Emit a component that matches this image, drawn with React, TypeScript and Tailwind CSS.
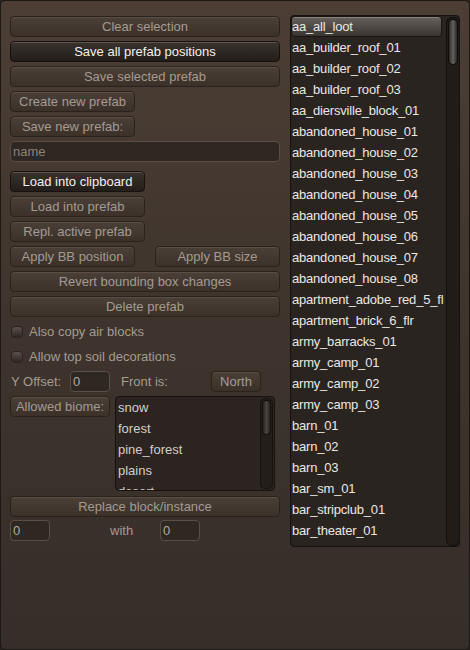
import React from "react";

const font = "font-['Liberation_Sans',Arial,sans-serif]";

/** Beveled game-UI button. `on` = the darker active style with bright text */
const Btn: React.FC<{ label: string; w?: string; on?: boolean }> = ({ label, w = "w-full", on }) => (
  <div
    className={`${w} h-[21px] shrink-0 flex items-center justify-center rounded-[4px] border text-[13px] leading-none ${
      on
        ? "bg-gradient-to-b from-[#3a322c] to-[#231e1a] border-[#17120f] text-[#f2f0ee] shadow-[inset_0_1px_0_#5e544b]"
        : "bg-gradient-to-b from-[#4b4038] to-[#3b3129] border-[#2a221d] text-[#a39b93] shadow-[inset_0_1px_0_#5a4e45]"
    }`}
  >
    {label}
  </div>
);

const Field: React.FC<{ value: string; w: string; dim?: boolean }> = ({ value, w, dim }) => (
  <div
    className={`${w} h-[21px] shrink-0 flex items-center px-[2px] rounded-[4px] border border-[#5a4e45] bg-[#2f2722] text-[13px] ${
      dim ? "text-[#8a827b]" : "text-[#b3aba3]"
    }`}
  >
    {value}
  </div>
);

const Check: React.FC<{ label: string }> = ({ label }) => (
  <div className="h-[21px] flex items-center gap-[6px] text-[13px] text-[#a39b93]">
    <span className="ml-[1px] w-[12px] h-[12px] rounded-[4px] bg-gradient-to-b from-[#5c524a] to-[#2e2722] border border-[#2a221d]" />
    {label}
  </div>
);

const prefabs = [
  "aa_all_loot",
  "aa_builder_roof_01",
  "aa_builder_roof_02",
  "aa_builder_roof_03",
  "aa_diersville_block_01",
  "abandoned_house_01",
  "abandoned_house_02",
  "abandoned_house_03",
  "abandoned_house_04",
  "abandoned_house_05",
  "abandoned_house_06",
  "abandoned_house_07",
  "abandoned_house_08",
  "apartment_adobe_red_5_fl",
  "apartment_brick_6_flr",
  "army_barracks_01",
  "army_camp_01",
  "army_camp_02",
  "army_camp_03",
  "barn_01",
  "barn_02",
  "barn_03",
  "bar_sm_01",
  "bar_stripclub_01",
  "bar_theater_01",
];

const biomes = ["snow", "forest", "pine_forest", "plains", "desert"];

export default function App() {
  return (
    <div className={`${font} w-[470px] h-[650px] bg-[#2a221d]`}>
      <div className="w-full h-full rounded-[5px] border border-[#1d1814] bg-gradient-to-b from-[#4c3e35] via-[#3e342d] to-[#362e29] flex pt-[14px]">
        {/* left controls */}
        <div className="ml-[9px] mt-[1px] w-[270px] flex flex-col">
          <div className="flex flex-col gap-[4px]">
            <Btn label="Clear selection" />
            <Btn label="Save all prefab positions" on />
            <Btn label="Save selected prefab" />
            <Btn label="Create new prefab" w="w-[125px]" />
            <Btn label="Save new prefab:" w="w-[125px]" />
            <Field value="name" w="w-full" dim />
          </div>
          <div className="mt-[9px] flex flex-col gap-[4px]">
            <Btn label="Load into clipboard" w="w-[135px]" on />
            <Btn label="Load into prefab" w="w-[135px]" />
            <Btn label="Repl. active prefab" w="w-[135px]" />
            <div className="flex justify-between">
              <Btn label="Apply BB position" w="w-[125px]" />
              <Btn label="Apply BB size" w="w-[125px]" />
            </div>
            <Btn label="Revert bounding box changes" />
            <Btn label="Delete prefab" />
            <Check label="Also copy air blocks" />
            <Check label="Allow top soil decorations" />
            <div className="h-[21px] flex items-center text-[13px] text-[#a39b93]">
              <span className="w-[60px] pl-[1px]">Y Offset:</span>
              <Field value="0" w="w-[40px]" />
              <span className="ml-[11px] w-[90px]">Front is:</span>
              <Btn label="North" w="w-[50px]" />
            </div>
            <div className="flex items-start">
              <Btn label="Allowed biome:" w="w-[100px]" />
              <div className="ml-[5px] w-[160px] h-[95px] rounded-[4px] border border-[#17120f] bg-[#2b2420] relative overflow-hidden">
                <div className="flex flex-col pl-[2px]">
                  {biomes.map((b) => (
                    <div key={b} className="h-[21px] flex items-center text-[13px] text-[#d4cfca]">
                      {b}
                    </div>
                  ))}
                </div>
                <div className="absolute right-[1px] top-[1px] bottom-[1px] w-[13px] rounded-[5px] bg-[#241e1a] border border-[#17120f]">
                  <div className="mx-auto mt-[1px] w-[9px] h-[35px] rounded-[4px] bg-gradient-to-r from-[#2a2420] via-[#4a433e] to-[#2a2420] border border-[#120e0c]" />
                </div>
              </div>
            </div>
          </div>
          <div className="mt-[5px] flex flex-col gap-[3px]">
            <Btn label="Replace block/instance" />
            <div className="h-[21px] flex items-center text-[13px] text-[#a39b93]">
              <Field value="0" w="w-[40px]" />
              <span className="ml-[60px] w-[50px]">with</span>
              <Field value="0" w="w-[40px]" />
            </div>
          </div>
        </div>

        {/* right prefab list */}
        <div className="ml-[10px] w-[170px] h-[532px] rounded-[4px] border border-[#17120f] bg-[#2a2420] relative overflow-hidden">
          <div className="flex flex-col">
            {prefabs.map((p, i) => (
              <div
                key={p}
                className={`h-[21px] flex items-center text-[13px] tracking-[-0.2px] text-[#ebe7e3] ${
                  i === 0
                    ? "w-[151px] rounded-[4px] border border-[#1a1512] bg-gradient-to-b from-[#67615c] to-[#3a3531] shadow-[inset_0_1px_0_#8a847e]"
                    : "pl-[1px]"
                }`}
              >
                {p}
              </div>
            ))}
          </div>
          <div className="absolute right-[-1px] top-[1px] bottom-[0px] w-[14px] rounded-[6px] bg-[#221c18] border border-[#120e0c]">
            <div className="mx-auto mt-[1px] w-[10px] h-[46px] rounded-[5px] bg-gradient-to-r from-[#2c2926] via-[#67615c] to-[#2c2926] border border-[#0e0b09]" />
          </div>
        </div>
      </div>
    </div>
  );
}
